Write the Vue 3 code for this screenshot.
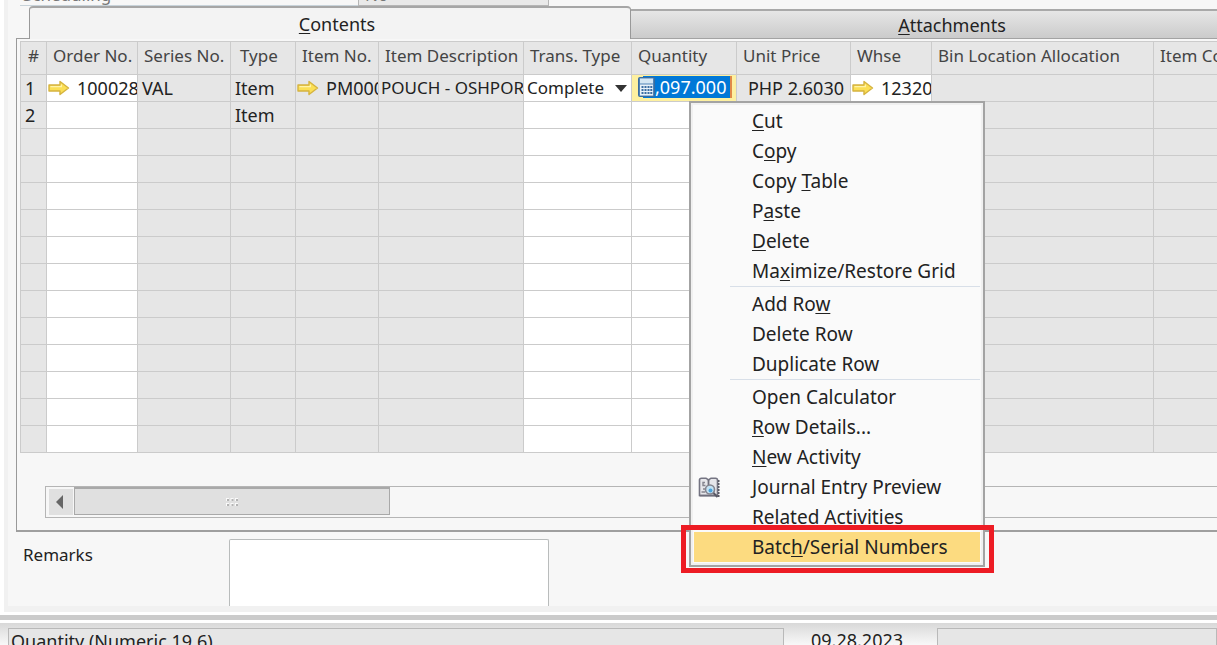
<script setup>
const columns = [
  { key: 'no', title: '#', width: 26 },
  { key: 'order', title: 'Order No.', width: 91, editable: true },
  { key: 'series', title: 'Series No.', width: 93 },
  { key: 'type', title: 'Type', width: 65 },
  { key: 'item', title: 'Item No.', width: 83 },
  { key: 'description', title: 'Item Description', width: 145 },
  { key: 'trans', title: 'Trans. Type', width: 108, editable: true },
  { key: 'quantity', title: 'Quantity', width: 105, editable: true },
  { key: 'price', title: 'Unit Price', width: 114 },
  { key: 'whse', title: 'Whse', width: 81 },
  { key: 'bin', title: 'Bin Location Allocation', width: 222 },
  { key: 'cost', title: 'Item Cost' },
]

const rows = Array.from({ length: 14 }, () => ({}))
rows[0] = {
  no: '1',
  order: '100028',
  series: 'VAL',
  type: 'Item',
  item: 'PM000',
  description: 'POUCH - OSHPOR',
  trans: 'Complete',
  quantity: ',097.000',
  price: 'PHP 2.6030',
  whse: '12320',
}
rows[1] = { no: '2', type: 'Item' }

const linked = ['order', 'item', 'whse']

// Each label is [before, access key, after].
const menuGroups = [
  [
    { label: ['', 'C', 'ut'] },
    { label: ['C', 'o', 'py'] },
    { label: ['Copy ', 'T', 'able'] },
    { label: ['P', 'a', 'ste'] },
    { label: ['', 'D', 'elete'] },
    { label: ['Ma', 'x', 'imize/Restore Grid'] },
  ],
  [
    { label: ['Add Ro', 'w', ''] },
    { label: ['Delete Row', '', ''] },
    { label: ['Duplicate Row', '', ''] },
  ],
  [
    { label: ['Open Calculator', '', ''] },
    { label: ['', 'R', 'ow Details...'] },
    { label: ['', 'N', 'ew Activity'] },
    { label: ['Journal Entry Preview', '', ''], icon: true },
    { label: ['Related Activities', '', ''] },
    { label: ['Batc', 'h', '/Serial Numbers'], active: true },
  ],
]
</script>

<template>
  <div class="window">
    <main class="form">
      <div class="scheduling">
        <span class="scheduling-label">Scheduling</span>
        <span class="scheduling-value">No</span>
      </div>

      <div class="tabs" role="tablist">
        <button class="tab tab-active" role="tab" aria-selected="true"><span><u>C</u>ontents</span></button>
        <button class="tab tab-idle" role="tab" aria-selected="false"><span><u>A</u>ttachments</span></button>
      </div>

      <section class="panel">
        <table class="grid">
          <colgroup>
            <col v-for="c in columns" :key="c.key" :style="c.width ? { width: c.width + 'px' } : {}" />
          </colgroup>
          <thead>
            <tr>
              <th v-for="c in columns" :key="c.key" :class="'h-' + c.key">{{ c.title }}</th>
            </tr>
          </thead>
          <tbody>
            <tr v-for="(row, i) in rows" :key="i">
              <td
                v-for="c in columns"
                :key="c.key"
                :class="['c-' + c.key, { editable: c.editable || (c.key === 'whse' && row.whse), focused: c.key === 'quantity' && row.quantity }]"
              >
                <div v-if="row[c.key] && linked.includes(c.key)" class="linked">
                  <svg class="arrow" width="22" height="16" viewBox="0 0 22 16">
                    <path d="M1 5H12V1.5L20.5 8L12 14.5V11H1Z" fill="#fbdf55" stroke="#d5b33f" stroke-width="1.4" stroke-linejoin="round" />
                    <path d="M2.5 6.6H13.4V4.6" fill="none" stroke="#fff3a8" stroke-width="1.2" />
                  </svg>
                  <input v-if="c.key !== 'item'" class="cell-input" :value="row[c.key]" :aria-label="c.title" />
                  <span v-else>{{ row[c.key] }}</span>
                </div>
                <div v-else-if="row.trans && c.key === 'trans'" class="picker">
                  <select aria-label="Trans. Type">
                    <option>Complete</option>
                    <option>Reject</option>
                  </select>
                  <svg width="12" height="7" viewBox="0 0 12 7"><path d="M0 0H12L6 7Z" fill="#333" /></svg>
                </div>
                <div v-else-if="row.quantity && c.key === 'quantity'" class="quantity">
                  <svg width="17" height="20" viewBox="0 0 17 20">
                    <rect x="0.5" y="0.5" width="16" height="19" rx="1" fill="#4f83b5" stroke="#3a6c9e" />
                    <rect x="2" y="1.5" width="13" height="5" fill="#d4e6f3" />
                    <rect x="2" y="7.5" width="13" height="11" fill="#e9f2f9" />
                    <g fill="#3b6ea3">
                      <path d="M3.5 9h2v2h-2zM6.5 9h2v2h-2zM9.5 9h2v2h-2zM12.3 9h2v2h-2zM3.5 12h2v2h-2zM6.5 12h2v2h-2zM9.5 12h2v2h-2zM12.3 12h2v2h-2zM3.5 15h2v2h-2zM6.5 15h2v2h-2zM9.5 15h2v2h-2zM12.3 15h2v2h-2z" />
                    </g>
                  </svg>
                  <input class="cell-input" :value="row.quantity" aria-label="Quantity" />
                </div>
                <template v-else>{{ row[c.key] }}</template>
              </td>
            </tr>
          </tbody>
        </table>

        <div class="scrollbar">
          <button class="scroll-step" aria-label="Scroll left">
            <svg width="7" height="14" viewBox="0 0 7 14"><path d="M7 0V14L0 7Z" fill="#666" /></svg>
          </button>
          <button class="scroll-thumb" aria-label="Scroll position">
            <svg width="14" height="10" viewBox="0 0 14 10">
              <path d="M1 1h3v3h-3zM5.5 1h3v3h-3zM10 1h3v3h-3zM1 6h3v3h-3zM5.5 6h3v3h-3zM10 6h3v3h-3z" fill="#fafafa" />
              <path d="M2 2h2v2h-2zM6.5 2h2v2h-2zM11 2h2v2h-2zM2 7h2v2h-2zM6.5 7h2v2h-2zM11 7h2v2h-2z" fill="#b4b4b4" />
            </svg>
          </button>
        </div>
      </section>

      <div class="remarks">
        <label for="remarks">Remarks</label>
        <textarea id="remarks"></textarea>
      </div>
    </main>

    <footer class="status">
      <div class="status-field status-hint">Quantity (Numeric 19.6)</div>
      <div class="status-date">09.28.2023</div>
      <div class="status-field status-rest"></div>
    </footer>

    <div class="menu" role="menu">
      <div v-for="(group, g) in menuGroups" :key="g" class="menu-group">
        <button v-for="item in group" :key="item.label.join('')" class="menu-item" :class="{ active: item.active }" role="menuitem">
          <span class="menu-icon">
            <svg v-if="item.icon" width="22" height="21" viewBox="0 0 22 21">
              <path d="M1.5 3Q1.5 1.2 3.5 1.2H8L10.5 3L13 1.2H17.5Q19.5 1.2 19.5 3V18.5H1.5Z" fill="#e6e6ea" stroke="#747482" stroke-width="1.6" />
              <path d="M10.5 3V9M1.5 18.6H20" stroke="#6f6f7c" stroke-width="1.8" />
              <path d="M7 5.5H5V8.5H7.5M5 12H7M3.5 15H7" fill="none" stroke="#85858f" stroke-width="1.4" />
              <path d="M20.7 3V20" stroke="#5a5a66" stroke-width="1.6" stroke-dasharray="2 1" />
              <circle cx="12" cy="12.5" r="4.5" fill="#c3e2f4" stroke="#85858f" stroke-width="1.6" />
              <circle cx="12.5" cy="13.5" r="2" fill="#4ba3dc" />
              <path d="M15.5 16L19.5 20" stroke="#5a5a66" stroke-width="2" />
            </svg>
          </span>
          <span>{{ item.label[0] }}<u v-if="item.label[1]">{{ item.label[1] }}</u>{{ item.label[2] }}</span>
        </button>
      </div>
    </div>
  </div>
</template>

<style>
body {
  margin: 0;
}
</style>

<style scoped>
.window {
  position: relative;
  display: flex;
  flex-direction: column;
  height: 100vh;
  overflow: hidden;
  background: #fff;
  color: #222;
  font-family: "Noto Sans", "Open Sans", sans-serif;
  font-size: 17px;
}
.window * {
  box-sizing: border-box;
}
button,
input,
select,
textarea {
  margin: 0;
  padding: 0;
  border: 0;
  border-radius: 0;
  background: none;
  color: inherit;
  font: inherit;
}
u {
  text-decoration-thickness: 1px;
  text-underline-offset: 2px;
}
svg {
  display: block;
  flex: none;
}
.form {
  flex: none;
  margin-left: 4px;
  padding-left: 12px;
  border-bottom: 6px solid #f1f1f1;
  background: linear-gradient(90deg, #f1f1f1 4px, #f7f7f7 4px);
}
.scheduling {
  display: flex;
  align-items: flex-end;
  height: 6px;
  margin-left: 4px;
  overflow: hidden;
  color: #777;
}
.scheduling-label {
  width: 338px;
  padding-left: 3px;
  border-bottom: 1px solid #c8d3da;
  line-height: 20px;
}
.scheduling-value {
  width: 191px;
  padding-left: 6px;
  border: 1px solid #b5b5b5;
  background: #e9e9e9;
  line-height: 20px;
}
.tabs {
  display: flex;
  align-items: flex-end;
  height: 33px;
  padding-left: 13px;
  background: linear-gradient(#9c9c9c, #9c9c9c) 0 100% / 14px 1px no-repeat;
}
.tab {
  font-size: 18px;
  line-height: 24px;
  text-align: center;
}
.tab-active {
  flex: none;
  width: 602px;
  height: 33px;
  padding: 1px 0 0 14px;
  border: 1px solid #999;
  border-top: 2px solid #a6a6a6;
  border-bottom: 0;
  border-radius: 4px 4px 0 0;
  background: #f3f3f3;
}
.tab-idle {
  flex: 1;
  height: 30px;
  padding-left: 56px;
  border-top: 2px solid #a9a9a9;
  border-bottom: 1px solid #a3a3a3;
  background: linear-gradient(#e6e6e6, #cbcbcb);
}
.panel {
  border-left: 1px solid #999;
  border-bottom: 2px solid #9f9f9f;
  padding: 2px 0 12px 3px;
}
.grid {
  width: 100%;
  table-layout: fixed;
  border-collapse: separate;
  border-spacing: 0;
}
th,
td {
  overflow: hidden;
  padding: 0;
  border-left: 1px solid #cbcbcb;
  border-bottom: 1px solid #cbcbcb;
  background: #e6e6e6;
  white-space: nowrap;
  text-align: left;
}
th {
  height: 34px;
  padding: 0 0 4px 6px;
  border-top: 1px solid #cbcbcb;
  color: #444;
  font-weight: 400;
  line-height: 24px;
}
td {
  height: 27px;
  padding-left: 4px;
  font-size: 18px;
  line-height: 24px;
}
.h-no {
  padding-left: 7px;
}
.h-type {
  padding-left: 9px;
}
.editable {
  background: #fff;
}
.c-description {
  padding-left: 2px;
  font-size: 17px;
}
.c-price {
  padding-right: 6px;
  text-align: right;
}
.linked,
.picker,
.quantity {
  display: flex;
  align-items: center;
  height: 24px;
}
.linked {
  gap: 7px;
  margin-left: -3px;
}
.cell-input {
  flex: 1;
  min-width: 0;
  height: 24px;
}
.picker {
  margin-left: -1px;
  font-size: 17px;
}
.picker select {
  flex: 1;
  min-width: 0;
  appearance: none;
}
.picker svg {
  margin-right: 4px;
}
.focused {
  background: #fdf0a0;
}
.quantity {
  height: 22px;
  margin: 0 4px 2px 2px;
  background: linear-gradient(90deg, #fdf0a0 5px, #0078d7 5px);
}
.quantity .cell-input {
  height: 22px;
  border-right: 2px solid #e08a4a;
  color: #fff;
}
.scrollbar {
  display: flex;
  gap: 1px;
  height: 32px;
  margin: 33px 0 0 25px;
  padding: 0 0 0 3px;
  border: 1px solid #b5b5b5;
  border-right: 0;
}
.scroll-step,
.scroll-thumb {
  display: flex;
  align-items: center;
  justify-content: center;
  background: #e0e0e0;
}
.scroll-step {
  width: 24px;
  height: 26px;
  padding-right: 4px;
  margin-top: 2px;
}
.scroll-thumb {
  width: 316px;
  height: 28px;
  border: 1px solid #a9a9a9;
  border-top-width: 2px;
}
.remarks {
  display: flex;
  padding: 7px 0 0 7px;
}
.remarks label {
  width: 206px;
  padding-top: 4px;
  line-height: 24px;
}
.remarks textarea {
  width: 320px;
  height: 67px;
  border: 1px solid #b9bcbc;
  border-bottom: 0;
  border-radius: 2px 2px 0 0;
  background: #fff;
  resize: none;
}
.status {
  display: flex;
  flex: none;
  margin-top: 3px;
  padding: 8px 0 0 8px;
  border-top: 5px solid #cbcbcb;
  background: linear-gradient(#fff 3px, #d8d8d8 3px, #e0e0e0 8px, #f7f7f7 24px);
  font-size: 18px;
}
.status-field,
.status-date {
  height: 28px;
  line-height: 24px;
}
.status-field {
  border: 1px solid #b9b9b9;
  background: #e6e6e6;
}
.status-hint {
  width: 776px;
  padding-left: 2px;
}
.status-date {
  width: 153px;
  padding-left: 27px;
}
.status-rest {
  flex: 1;
}
.menu {
  position: absolute;
  top: 101px;
  left: 689px;
  width: 296px;
  padding: 3px;
  border: 2px solid #a3a3a3;
  background: #fafafa;
  box-shadow: inset 0 0 0 2px #f0f0f0;
  font-size: 19px;
}
.menu-group + .menu-group {
  padding-top: 3px;
  background: linear-gradient(#d8dfe8, #d8dfe8) 36px 0 / 100% 1px no-repeat;
}
.menu-item {
  position: relative;
  display: flex;
  align-items: center;
  width: 100%;
  height: 30px;
  line-height: 30px;
  text-align: left;
  white-space: nowrap;
}
.menu-icon {
  width: 58px;
  padding-left: 4px;
}
.active {
  background: #fcdb80;
}
.active::after {
  content: "";
  position: absolute;
  inset: -7px -14px -11px -13px;
  border: 5px solid #ed1c24;
}
</style>
